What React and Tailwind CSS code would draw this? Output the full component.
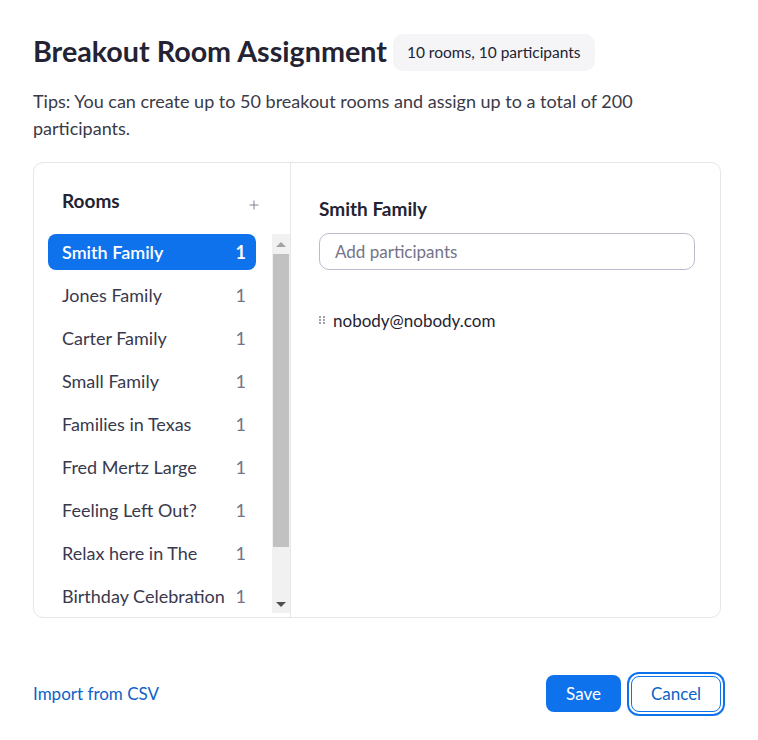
import { Plus } from 'lucide-react'

const rooms = [
  'Smith Family',
  'Jones Family',
  'Carter Family',
  'Small Family',
  'Families in Texas',
  'Fred Mertz Large',
  'Feeling Left Out?',
  'Relax here in The',
  'Birthday Celebration',
]

const App = () => {
  return (
    <div className="w-[758px] h-[740px] bg-white font-['Lato',sans-serif] text-[#232333] pl-[33px] pr-[37px] pt-[30px]">
      {/* Title */}
      <div className="flex items-center gap-[6px]">
        <h1 className="m-0 text-[28.7px] font-bold leading-[34px]">Breakout Room Assignment</h1>
        <span className="bg-[#f5f5f7] rounded-[10px] px-[14px] h-[37px] flex items-center text-[15.5px] text-[#232333] mt-[4px]">10 rooms, 10 participants</span>
      </div>
      <p className="mt-[17px] text-[18px] leading-[27px] text-[#3a3a48]">
        Tips: You can create up to 50 breakout rooms and assign up to a total of 200 participants.
      </p>

      {/* Main card */}
      <div className="mt-[20px] h-[456px] border border-[#e6e6ea] rounded-[10px] flex overflow-hidden">
        {/* Rooms list */}
        <div className="w-[257px] border-r border-[#e6e6ea] flex flex-col">
          <div className="flex items-start justify-between pl-[28px] pr-[29px] pt-[26px] h-[71px]">
            <span className="text-[19px] font-bold leading-[24px]">Rooms</span>
            <Plus size={14} strokeWidth={1.5} className="text-[#747487] mt-[9px]" />
          </div>
          <div className="flex flex-1 min-h-0 pb-[4px]">
            <div className="flex-1 pl-[14px] pr-[16px] flex flex-col gap-[7px] overflow-hidden">
              {rooms.map((room, i) => (
                <div
                  key={room}
                  className={
                    i === 0
                      ? 'h-[36px] shrink-0 flex items-center justify-between pl-[14px] pr-[10px] rounded-[8px] bg-[#0e72ed] text-white text-[18px] font-semibold'
                      : 'h-[36px] shrink-0 flex items-center justify-between pl-[14px] pr-[10px] rounded-[8px] text-[18px] text-[#39394d]'
                  }>
                  <span className="whitespace-nowrap">{room}</span>
                  <span className={i === 0 ? 'text-white font-bold' : 'text-[#747487]'}>1</span>
                </div>
              ))}
            </div>
            {/* Scrollbar */}
            <div className="w-[18px] bg-[#f1f1f1] flex flex-col items-center">
              <div className="h-[20px] flex items-center justify-center">
                <div className="w-0 h-0 border-l-[5px] border-r-[5px] border-b-[5px] border-l-transparent border-r-transparent border-b-[#a3a3a3]" />
              </div>
              <div className="w-[16px] h-[293px] bg-[#c1c1c1]" />
              <div className="flex-1" />
              <div className="h-[18px] flex items-center justify-center">
                <div className="w-0 h-0 border-l-[5px] border-r-[5px] border-t-[5px] border-l-transparent border-r-transparent border-t-[#505050]" />
              </div>
            </div>
          </div>
        </div>

        {/* Room detail */}
        <div className="flex-1 pl-[28px] pr-[25px] pt-[34px]">
          <h2 className="m-0 text-[19px] font-bold leading-[24px]">Smith Family</h2>
          <div className="mt-[12px] h-[37px] border border-[#babacc] rounded-[10px] flex items-center px-[15px] text-[17px] text-[#747487]">
            Add participants
          </div>
          <div className="mt-[38px] flex items-center gap-[7px] text-[17px] text-[#232333]">
            <svg width="7" height="10" viewBox="0 0 7 10" className="shrink-0">
              {[1, 4, 7].map((y) => (
                <g key={y}>
                  <rect x="0" y={y - 1} width="2" height="2" fill="#a0a0a8" />
                  <rect x="4" y={y - 1} width="2" height="2" fill="#a0a0a8" />
                </g>
              ))}
            </svg>
            <span>nobody@nobody.com</span>
          </div>
        </div>
      </div>

      {/* Footer */}
      <div className="mt-[57px] flex items-center justify-between">
        <span className="text-[17px] text-[#0e62c7]">Import from CSV</span>
        <div className="flex items-center gap-[10px]">
          <button className="h-[37px] w-[75px] rounded-[8px] bg-[#0e72ed] text-white text-[17px] font-['Lato',sans-serif]">Save</button>
          <button className="h-[36px] w-[90px] rounded-[8px] bg-white border border-[#0e72ed] text-[#0e62c7] text-[17px] font-['Lato',sans-serif] ring-2 ring-[#0e72ed] ring-offset-[2px]">
            Cancel
          </button>
        </div>
      </div>
    </div>
  )
}

export default App
